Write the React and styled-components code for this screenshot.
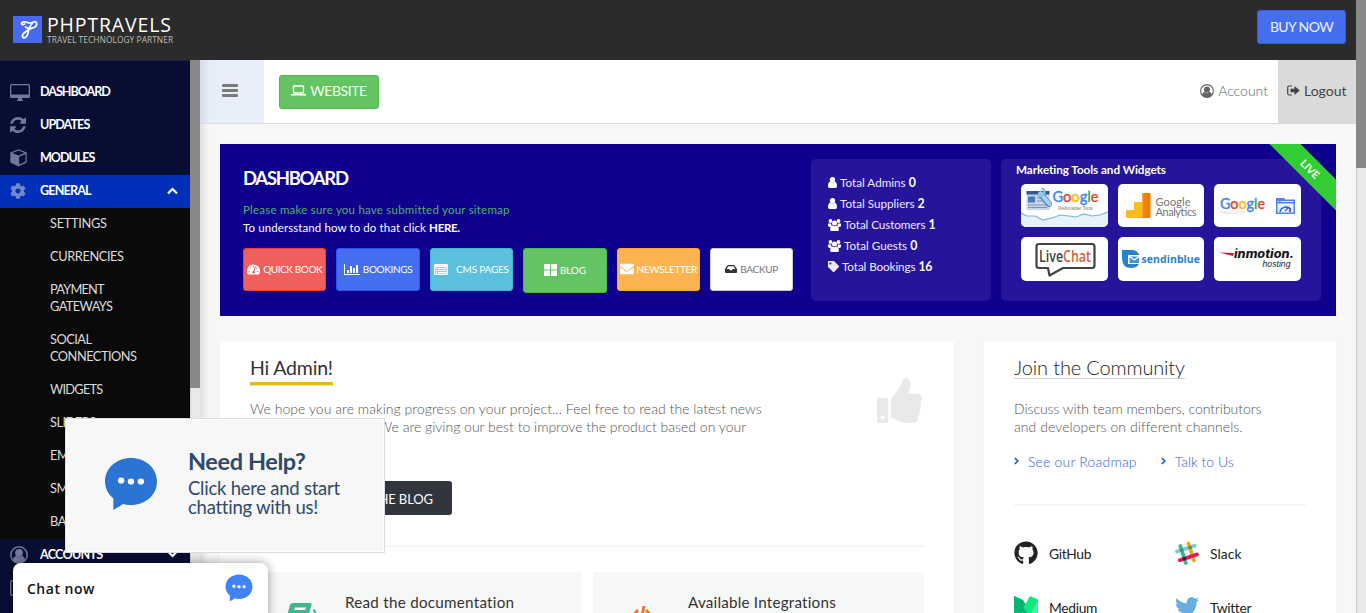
import React from 'react';
import styled, { createGlobalStyle, css } from 'styled-components';
import {
  FaCog, FaThumbsUp, FaTachometerAlt, FaEnvelope, FaInbox, FaTag, FaTwitter, FaGithub,
} from 'react-icons/fa';

const Global = createGlobalStyle`
  *, *::before, *::after { box-sizing: border-box; }
  body { margin: 0; background: #f7f7f7; overflow: hidden; font-family: Lato, "Liberation Sans", sans-serif; font-size: 13px; color: #333; }
  a { color: inherit; text-decoration: none; }
  svg { display: block; flex: none; }
  h1, h2, h3, p, ul { margin: 0; padding: 0; font-weight: inherit; font-size: inherit; list-style: none; }
`;

/* shared */
const T = styled.span`
  white-space: nowrap;
  letter-spacing: ${p => p.$ls || 0}px;
`;

/* frame */
const Window = styled.div`display: flex; height: 613px; width: 1366px; overflow: hidden;`;
const Page = styled.div`width: 1356px; display: flex; flex-direction: column;`;
const ScrollTrack = styled.div`
  width: 10px; flex: none; background: #e9e9e9; border-left: 1px solid #c8c8c8;
`;
const ScrollThumb = styled.div`width: 10px; margin-left: -1px; height: ${p => p.$h}px; background: #888;`;

const TopBar = styled.header`
  height: 60px; flex: none; background: #2b2b2b; display: flex; align-items: center;
  justify-content: space-between; padding: 0 10px 2px 13px;
`;
const Brand = styled.a`display: flex; align-items: center; gap: 5px;`;
const BrandText = styled.div`display: flex; flex-direction: column; font-family: "Open Sans", sans-serif; padding-top: 1px;`;
const BrandName = styled(T)`font-size: 19.5px; line-height: 20px; font-weight: 500; color: #fff;`;
const BrandTag = styled(T)`font-size: 8.4px; line-height: 10px; color: #bdbdbd;`;
const BuyButton = styled.button`
  width: 89px; height: 34px; margin-bottom: 4px; padding: 0 0 2px; border-radius: 3px; background: #466ef1; border: 1px solid #2f5cf0;
  color: #eef2ff; font: 400 14px Lato, sans-serif;
`;
const Body = styled.div`flex: 1; min-height: 0; display: flex;`;

/* sidebar */
const Sidebar = styled.nav`
  width: 190px; flex: none; background: #080e33; border-top: 1px solid #1c2348; padding-top: 15px;
  height: 553px; overflow: hidden;
`;
const NavItem = styled.a`
  display: flex; align-items: center; height: 33px; padding: 0 0 2px 10px; color: #fff; font-weight: 700; font-size: 12.6px;
  ${p => p.$active && css`background: #0030b9;`}
`;
const NavIcon = styled.span`width: 30px; color: ${p => (p.$active ? '#7488c9' : '#74779a')}; margin-top: 1px;`;
const NavArrow = styled.span`margin-left: auto; margin-right: 12px;`;
const SubMenu = styled.div`background: #0a0a0a;`;
const SubItem = styled.a`
  display: block; padding: 7.4px 40px 8.6px 50px; min-height: 33px; line-height: 17px; font-size: 12.8px; color: #dcdcdc;
`;
const SideScroll = styled.div`width: 10px; flex: none; background: #e9e9e9; border-left: 1px solid #d2d2d2;`;

/* content */
const Content = styled.div`flex: 1; display: flex; flex-direction: column; box-shadow: inset 12px 0 10px -10px rgba(0,0,0,.14);`;
const SubBar = styled.div`height: 64px; flex: none; display: flex; background: #fff; border-bottom: 1px solid #d9dadb; align-items: stretch;`;
const Burger = styled.div`
  width: 64px; background: linear-gradient(90deg, #d6dde9, #e7eefa 10px); display: flex; flex-direction: column; justify-content: center; gap: 2px;
  padding: 0 0 3px 22px;
`;
const BurgerLine = styled.i`width: 16px; height: 3px; background: #7a7a7a; border-radius: 1px;`;
const WebsiteButton = styled.a`
  align-self: center; margin: 0 0 0 15px; width: 100px; height: 34px; background: #64c464; border: 1px solid #4dbb4d; border-radius: 3px;
  color: #f4fff4; font-size: 14px; display: flex; align-items: center; justify-content: center; gap: 4px; padding-bottom: 2px;
`;
const AccountLink = styled.a`
  margin-left: auto; display: flex; align-items: center; gap: 4px; padding: 0 10px 2px 0; color: #666; font-size: 14px; font-weight: 300;
`;
const LogoutLink = styled.a`width: 78px; background: #dadada; display: flex; align-items: center; gap: 4px; padding: 0 0 2px 9px; color: #444; font-size: 14px;`;
const Main = styled.main`padding: 20px 20px 0; display: flex; flex-direction: column; gap: 25px;`;

/* banner */
const Banner = styled.section`
  position: relative; height: 172px; background: #0f008e; color: #fff; display: flex; padding: 15px 15px 15px 23px; overflow: hidden; flex: none;
`;
const Intro = styled.div`width: 568px; flex: none; display: flex; flex-direction: column;`;
const BannerTitle = styled.h1`font-size: 18.5px; font-weight: 700; line-height: 24px; margin-top: 7px;`;
const Notice = styled.p`font-size: 11.5px; line-height: 18px; white-space: nowrap; color: ${p => p.$c};`;
const Notices = styled.div`margin: 11px 0 11px;`;
const Actions = styled.div`display: flex; gap: 10px; align-items: flex-start;`;
const Action = styled.a`
  width: 83.4px; height: ${p => p.$h || 43}px; border-radius: 3px; background: ${p => p.$bg}; border: 1px solid ${p => p.$bd};
  color: ${p => p.$fg || '#fff'}; font-size: 10px; display: flex; align-items: center; justify-content: center; gap: ${p => p.$gap || 3}px;
  padding-bottom: 1px;
`;
const Stats = styled.ul`width: 180px; height: 142px; background: #26149a; border-radius: 5px; padding: 13px 0 0 17px;`;
const Stat = styled.li`height: 21px; display: flex; align-items: center; gap: 3px; font-size: 11.7px; color: #ece9ff;
  b { font-size: 12.3px; color: #fff; margin-left: 3px; letter-spacing: -.4px; }`;
const Tools = styled.div`width: 320px; height: 142px; margin-left: 10px; background: #26149a; border-radius: 5px; padding: 2px 20px 0;`;
const ToolsTitle = styled.h2`font-size: 11.7px; font-weight: 700; line-height: 16px; margin: 0 0 7px -5px;`;
const ToolGrid = styled.div`display: grid; grid-template-columns: 87px 86px 87px; column-gap: 10px; row-gap: 10px;`;
const Tool = styled.a`height: ${p => p.$h || 43}px; background: #fff; border-radius: 5px; overflow: hidden;`;
const Ribbon = styled.div`
  position: absolute; right: -39px; top: 14px; width: 130px; height: 22px; background: #32cd32; color: #fff; transform: rotate(45deg);
  font-size: 10.5px; font-weight: 700; line-height: 22px; text-align: center;
`;

/* cards */
const Columns = styled.div`display: flex; gap: 30px;`;
const Card = styled.section`
  background: #fff; border-radius: 3px; height: 300px; padding: ${p => p.$pt}px 30px 0; width: ${p => p.$w}px; box-shadow: 0 1px 2px rgba(0,0,0,.04);
`;
const CardTop = styled.div`display: flex; justify-content: space-between; height: 124px;`;
const Hello = styled.h2`font-size: 19.5px; line-height: 22px; display: inline-block; border-bottom: 3px solid #f1b320; color: #333; box-shadow: 0 1px #dcdcdc; height: 28px;`;
const Lead = styled.p`font-size: 14px; font-weight: 300; line-height: 18px; color: #555; margin-top: ${p => p.$mt}px;`;
const Hidden = styled.span`display: inline-block; width: 128px;`;
const ThumbWrap = styled.div`color: #e9e9eb; margin: 21px 2px 0 0;`;
const BlogButton = styled.a`
  display: flex; width: 202px; height: 34px; align-items: center; justify-content: flex-end; padding: 1px 19px 0 0;
  border-radius: 3px; background: #31353d; color: #fff; font-size: 13px;
`;
const Divider = styled.hr`border: 0; height: 2px; background: #f6f6f6; margin: ${p => p.$m};`;
const Tiles = styled.div`display: flex; gap: 12px;`;
const Tile = styled.a`width: 331px; height: 120px; background: #f6f7f7; padding: 20px 0 0 ${p => p.$pl}px; display: flex; gap: ${p => p.$gap}px; font-size: 15.2px; line-height: 20px; color: #333;`;
const TileIcon = styled.span`margin-top: ${p => p.$mt}px;`;
const JoinTitle = styled.h2`font-size: 20px; font-weight: 300; line-height: 23px; height: 23px; display: inline-block; border-bottom: 1px solid #cfd3d8; color: #222;`;
const Links = styled.div`display: flex; gap: 24px; margin-top: 16px; height: 18px; align-items: center; font-size: 14px; font-weight: 300; color: #3560e0;`;
const CardLink = styled.a`display: flex; align-items: center; gap: 9px;`;
const Channels = styled.div`display: grid; grid-template-columns: 161px 1fr; row-gap: 30px; margin-top: 36px;`;
const Channel = styled.a`display: flex; align-items: center; gap: 11px; height: 24px; padding-bottom: 2px; font-size: 13.8px; color: #222;`;

/* chat */
const HelpPopup = styled.aside`
  position: absolute; left: 65px; top: 418px; width: 320px; height: 135px; background: #f7f7f7; border: 1px solid #dcdcdc; box-shadow: inset 0 0 0 1px #fff;
  display: flex; align-items: flex-start; padding: 38px 0 0 38px; gap: 30px; color: #2f4a68;
`;
const HelpText = styled.div`display: flex; flex-direction: column; font-size: 18.5px; line-height: 19px; margin-top: -10px;
  b { font-size: 23.5px; line-height: 28px; margin-bottom: 4px; }`;
const ChatBar = styled.aside`
  position: absolute; left: 13px; top: 563px; width: 255px; height: 60px; border-radius: 8px; background: #fff; box-shadow: 0 0 10px 1px rgba(0,0,0,.33);
  display: flex; justify-content: space-between; padding: 10px 15px 0 14px; font: 600 14px/32px "Open Sans", sans-serif; color: #111;
  svg { margin-top: 1px; }
`;

const Monitor = () => (
  <svg width="20" height="17" viewBox="0 0 20 17" fill="currentColor">
    <path fillRule="evenodd" d="M1.5 0h17A1.5 1.5 0 0 1 20 1.5v11a1.5 1.5 0 0 1-1.5 1.5H12v1.5l1 .5v1H7v-1l1-.5V14H1.5A1.5 1.5 0 0 1 0 12.500v-11A1.500 1.500 0 0 1 1.500 0zM1.300 1.300v9.200h17.400V1.300z" />
  </svg>
);
const Refresh = () => (
  <svg width="16" height="16" viewBox="0 0 1536 1536" fill="currentColor">
    <path d="M1511 928q0 5-1 7-64 268-268 434.500T764 1536q-146 0-282.500-55T238 1324l-129 129q-19 19-45 19t-45-19-19-45V960q0-26 19-45t45-19h448q26 0 45 19t19 45-19 45l-137 137q71 66 161 102t187 36q134 0 250-65t186-179q11-17 53-117 8-23 30-23h192q13 0 22.500 9.500t9.500 22.500zm25-800v448q0 26-19 45t-45 19h-448q-26 0-45-19t-19-45 19-45l138-138Q969 256 768 256q-134 0-250 65T332 500q-11 17-53 117-8 23-30 23H50q-13 0-22.500-9.500T18 608v-7q65-268 270-434.500T768 0q146 0 284 55.500T1297 212l130-129q19-19 45-19t45 19 19 45z" />
  </svg>
);
const Cube = () => (
  <svg width="17" height="18" viewBox="0 0 17 18" fill="currentColor">
    <path fillRule="evenodd" d="M8.500 .3 16.700 3.500V13.500L8.500 17.500.3 13.500V3.500zM8.500 1.600 2.400 4 8.500 6.400 14.600 4zM9.200 7.700V15.600L15.500 12.600V5.200z" />
  </svg>
);
const UserCircle = ({ s }) => (
  <svg width={s} height={s} viewBox="0 0 18 18">
    <circle cx="9" cy="9" r="8.200" fill="none" stroke="currentColor" strokeWidth="1.500" />
    <circle cx="9" cy="7" r="3.900" fill="currentColor" />
    <path d="M2.500 14.400C3.200 11.300 5.100 10 6.400 10c1.600 1.500 3.600 1.500 5.200 0 1.300 0 3.200 1.300 3.900 4.400A8 8 0 0 1 9 17a8 8 0 0 1-6.500-2.600z" fill="currentColor" />
  </svg>
);
const Paper = () => (
  <svg width="16" height="16" viewBox="0 0 16 16" fill="none" stroke="currentColor" strokeWidth="1.400"><rect x=".7" y=".7" width="14.600" height="14.600" rx="1.500" /><path d="M3 4h9M3 7h3M3 9.500h3M3 12h3" /></svg>
);
const Chevron = ({ down }) => (
  <svg width="11" height="8" viewBox="0 0 11 8"><path d={down ? 'M1 1.500 5.500 6 10 1.500' : 'M1 6.500 5.500 2 10 6.500'} fill="none" stroke="#fff" strokeWidth="2.200" /></svg>
);
const Laptop = () => (
  <svg width="15" height="11" viewBox="0 0 15 11" fill="none" stroke="#fff"><rect x="2.500" y="1" width="10" height="7" rx=".8" strokeWidth="1.300" /><path d="M0 9.800h15" strokeWidth="1.500" /></svg>
);
const SignOut = () => (
  <svg width="13" height="11" viewBox="0 0 13 11"><path d="M5 1H2.200Q.7 1 .7 2.500v6Q.7 10 2.200 10H5" fill="none" stroke="currentColor" strokeWidth="1.200" /><path d="M3.500 3.800H7.500V1L12.800 5.500 7.500 10V7.200H3.500z" fill="currentColor" /></svg>
);
const Bars = () => (
  <svg width="16" height="11" viewBox="0 0 16 11" fill="#fff"><path d="M0 0h1v10h15v1H0zM3 6h2v3H3zM6 2h2v7H6zM9 4h2v5H9zM12 1h2v8h-2z" /></svg>
);
const Listing = () => (
  <svg width="14" height="11" viewBox="0 0 14 11"><rect width="14" height="11" rx="1.300" fill="#fff" /><path d="M1.200 3.200h11.600v6.500H1.200z" fill="#8bd3e8" /><path d="M2 4.500h1M4 4.500h8M2 6.500h1M4 6.500h8M2 8.500h1M4 8.500h8" stroke="#fff" strokeWidth="1" /></svg>
);
const Blocks = () => (
  <svg width="13" height="12" viewBox="0 0 13 12" fill="#fff"><path d="M0 0h6v5.500H0zM7 0h6v5.500H7zM0 6.500h6V12H0zM7 6.500h6V12H7z" /></svg>
);
const Group = () => (
  <svg width="13" height="12" viewBox="0 0 13 12" fill="#fff"><circle cx="2.500" cy="2" r="1.900" /><circle cx="10.500" cy="2" r="1.900" /><circle cx="6.500" cy="4" r="2.500" /><path d="M0 4.500h3.200Q3 6.500 4 7L2 8Q0 8 0 6.500zM13 4.500H9.800Q10 6.500 9 7L11 8q2 0 2-1.500zM2.200 9.500Q2.500 6.500 4.500 6.500q2 1.400 4 0 2 0 2.300 3V11q0 1-1 1H3.200q-1 0-1-1z" /></svg>
);
const Person = () => (
  <svg width="9" height="11" viewBox="0 0 9 11" fill="#fff"><circle cx="4.500" cy="2.700" r="2.700" /><path d="M0 9Q0 5 2.200 4.800q2.300 1.500 4.600 0Q9 5 9 9q0 2-1.500 2h-6Q0 11 0 9z" /></svg>
);
const Angle = () => (
  <svg width="5" height="8" viewBox="0 0 5 8"><path d="M.8 1 3.800 4 .8 7" fill="none" stroke="#1f5be8" strokeWidth="1.700" /></svg>
);
const Bubble = ({ w, color }) => (
  <svg width={w} height={w} viewBox="0 0 52 54" preserveAspectRatio="none">
    <path d="M26 1C40 1 51 11 51 24.500S40 48 26 48c-3 0-5-.3-7.500-1L9 53V41.500C4 37 1 31.500 1 24.500 1 11 12 1 26 1z" fill={color} />
    <g fill="#fff"><circle cx="16.500" cy="23.500" r="3.100" /><circle cx="26" cy="24.500" r="3.100" /><circle cx="35.500" cy="24.500" r="3.100" /></g>
  </svg>
);
const Logo = () => (
  <svg width="29" height="27" viewBox="0 0 29 27">
    <rect width="29" height="27" fill="#466af0" />
    <path d="M8.500 7C10 5.500 12 5.500 14.500 6.500S19 7.300 22 5.500C24.500 6.500 24.500 10 21 11.500S14 12 12.500 11M20 6.500C17 9.500 15.800 12.500 15 17s-4.500 6.500-5.500 3.500 4-5.500 9.500-8.500M8.500 8Q10 9.500 11.500 8" fill="none" stroke="#fff" strokeWidth="1.700" strokeLinecap="round" strokeLinejoin="round" />
  </svg>
);
const Book = () => (
  <svg width="32" height="30" viewBox="0 0 32 30"><path d="M8 0h17q2 0 1.500 2L21 21H4q-4 0-3-4L5 2Q5.500 0 8 0z" fill="#3fb68b" /><path d="M10 4.500h11l-.8 2.500h-11z" fill="#fff" /><path d="M28 7q3 1 2 4l-4 13H5" fill="none" stroke="#3fb68b" strokeWidth="2" /></svg>
);
const Code = () => (
  <svg width="34" height="26" viewBox="0 0 34 26" fill="none" stroke="#f0782d" strokeWidth="3"><path d="M12 4 4 13l9 8M18 0 13 24M20 4l8 9-8 8" /></svg>
);
const Slack = () => (
  <svg width="24" height="24" viewBox="0 0 24 24" fill="none" strokeWidth="3.800" strokeLinecap="round">
    <path d="M2 10.500 19.500 4.800" stroke="#7bcbd3" /><path d="M13.500 2.500 19 19.500" stroke="#e9a820" /><path d="M5.300 5 10.800 22" stroke="#3eb890" /><path d="M4.800 19.200 22 13.500" stroke="#e01765" />
    <path d="M6.700 9.200v-.2M15 6.600v-.2" stroke="#3f8f7c" strokeLinecap="square" strokeWidth="3" /><path d="M9.300 17.500v.1" stroke="#38273c" strokeLinecap="square" strokeWidth="3.400" /><path d="M17.600 15v.1" stroke="#c7362a" strokeLinecap="square" strokeWidth="3" />
  </svg>
);
const Medium = () => (
  <svg width="24" height="24" viewBox="0 0 24 24"><path d="M0 1 8 5v19H0z" fill="#00ab6c" /><path d="M0 1 9 5l8 13v6h-5L7 15V24H0z" fill="#00b874" /><path d="M9.500 12.500 16 1l8 3.500V24h-7z" fill="#12e780" /><path d="M17 18 24 6v18h-7z" fill="#3df79b" /></svg>
);

const google = ['#4285f4', '#ea4335', '#fbbc05', '#4285f4', '#34a853', '#ea4335'];
const GoogleWord = ({ x, y, size, len }) => (
  <text x={x} y={y} fontSize={size} fontFamily="Lato, sans-serif" fontWeight="500" textLength={len} lengthAdjust="spacingAndGlyphs">
    {'Google'.split('').map((c, i) => <tspan key={i} fill={google[i]} stroke={google[i]} strokeWidth=".3">{c}</tspan>)}
  </text>
);
const ToolSvg = ({ children }) => <svg width="87" height="44" viewBox="0 0 87 44">{children}</svg>;

const WebmasterTools = () => (
  <ToolSvg>
    <rect x="5.500" y="7" width="23" height="19" fill="#c7d6e8" /><rect x="5.500" y="7" width="23" height="3.500" fill="#35588f" />
    <rect x="7" y="12.500" width="7" height="6" fill="#4778ba" /><path d="M16 14h10M16 17h10M7 21h19M7 23.500h19" stroke="#7d94b2" />
    <path d="M19.500 10l8.500 10" stroke="#4e86c2" strokeWidth="6" strokeLinecap="round" /><path d="M19.500 9.500l9 10.500" stroke="#a8d2ef" strokeWidth="4" strokeLinecap="round" />
    <path d="M20.500 4.500q4 1 2.500 5-3 4-6.500 1" fill="none" stroke="#8fc1e8" strokeWidth="2.500" />
    <GoogleWord x="31.500" y="17.500" size="15" len="46" />
    <text x="37" y="26" fontSize="5" fill="#888" fontFamily="Liberation Sans" textLength="35">Webmaster Tools</text>
    <path d="M0 29l6 3 8 0 8 4 12-3 5-2 9 1 7 1 8-3 8 2 8-1 8-3V44H0z" fill="#e6f3fa" /><path d="M0 29l6 3 8 0 8 4 12-3 5-2 9 1 7 1 8-3 8 2 8-1 8-3" fill="none" stroke="#79b7da" strokeWidth="1.200" />
  </ToolSvg>
);
const Analytics = () => (
  <ToolSvg>
    <path d="M24.500 9h7.500q.5 0 .5.500V33q0 1-1 1h-7z" fill="#f57c00" /><path d="M24.500 9v25H9q-1 0-1-1v-6q0-1 1-1h7v-7q0-1 1-1h7.500V10q0-1 1-1z" fill="#fbbc1d" /><path d="M24.500 9v25h3V9z" fill="#ef8a0c" />
    <text fontSize="11" fill="#757575" fontFamily="Lato"><tspan x="37.500" y="21.500" textLength="35">Google</tspan><tspan x="37.500" y="31.800" textLength="41">Analytics</tspan></text>
  </ToolSvg>
);
const PageSpeed = () => (
  <ToolSvg>
    <GoogleWord x="6" y="24.500" size="15" len="45" />
    <text x="6" y="30" fontSize="4.500" fill="#dcdcdc" fontFamily="Liberation Sans" textLength="25">PageSpeed</text>
    <path d="M62 14h8l1.500 1.500H81V30H62z" fill="#4a86e8" /><rect x="63.500" y="19.500" width="16" height="9" fill="#e9f0fd" /><path d="M63.500 17.500h1.500M66.500 17.500h13" stroke="#dbe7fb" />
    <path d="M66 28a6 6 0 0 1 11-2" fill="none" stroke="#2c64c8" strokeWidth="1.500" /><path d="M71 27l4-4" stroke="#2c64c8" strokeWidth="1.300" /><circle cx="76" cy="27" r="1.200" fill="#e23d2e" />
  </ToolSvg>
);
const LiveChat = () => (
  <ToolSvg>
    <path d="M18 7h53q2.500 0 2.500 2.500v19Q73.500 31 71 31H42L28.500 38.500 27 31h-9q-2.500 0-2.500-2.500v-19Q15.500 7 18 7z" fill="#fff" stroke="#424242" strokeWidth="2.200" strokeLinejoin="round" />
    <text x="18" y="25" fontSize="16" fontWeight="600" fontFamily="Open Sans" fill="#424242" textLength="52" lengthAdjust="spacingAndGlyphs">Live<tspan fill="#d96532">Chat</tspan></text>
  </ToolSvg>
);
const SendInBlue = () => (
  <ToolSvg>
    <path d="M4 13h11q7 1 7 9.500T13 31Q4 31 4 21z" fill="#2a83c9" /><path d="M10 18h12v9H10z" fill="#fff" /><path d="M11.500 19.500h9.500v6.500h-9.500z" fill="#4593cf" /><path d="M11.500 19.500l4.800 3.500 4.700-3.500" fill="none" stroke="#fff" strokeWidth="1.300" />
    <text x="23.500" y="25.500" fontSize="10.500" fontWeight="700" fill="#2a83c9" fontFamily="Open Sans" textLength="58.500">sendinblue</text>
  </ToolSvg>
);
const InMotion = () => (
  <ToolSvg>
    <path d="M5 15.500 20 16 19 19z" fill="#c8202f" />
    <text x="20" y="20.500" fontSize="11.500" fontWeight="800" fontStyle="italic" fill="#1a1a1a" fontFamily="Inter" textLength="60" lengthAdjust="spacingAndGlyphs">inmotion.</text>
    <text x="48.500" y="30" fontSize="8.500" fontStyle="italic" fill="#1a1a1a" fontFamily="Liberation Sans" textLength="28" lengthAdjust="spacingAndGlyphs">hosting</text>
  </ToolSvg>
);

export default function App() {
  return (
    <>
      <Global />
      <Window>
        <Page>
          <TopBar>
            <Brand>
              <Logo />
              <BrandText><BrandName $ls={0.85}>PHPTRAVELS</BrandName><BrandTag $ls={0.05}>TRAVEL TECHNOLOGY PARTNER</BrandTag></BrandText>
            </Brand>
            <BuyButton><T $ls={-0.6}>BUY NOW</T></BuyButton>
          </TopBar>
          <Body>
            <Sidebar>
              <NavItem><NavIcon><Monitor /></NavIcon><T $ls={-1.05}>DASHBOARD</T></NavItem>
              <NavItem><NavIcon><Refresh /></NavIcon><T $ls={-0.95}>UPDATES</T></NavItem>
              <NavItem><NavIcon><Cube /></NavIcon><T $ls={-1.05}>MODULES</T></NavItem>
              <NavItem $active><NavIcon $active><FaCog size={16} /></NavIcon><T $ls={-0.85}>GENERAL</T><NavArrow><Chevron /></NavArrow></NavItem>
              <SubMenu>
                <SubItem><T $ls={-0.3}>SETTINGS</T></SubItem>
                <SubItem><T $ls={-0.4}>CURRENCIES</T></SubItem>
                <SubItem><T $ls={-0.8}>PAYMENT</T><br /><T $ls={-0.6}>GATEWAYS</T></SubItem>
                <SubItem><T $ls={-0.5}>SOCIAL</T><br /><T $ls={-0.5}>CONNECTIONS</T></SubItem>
                <SubItem><T $ls={-0.75}>WIDGETS</T></SubItem>
                <SubItem><T $ls={-0.5}>SLIDERS</T></SubItem>
                <SubItem><T $ls={-0.5}>EMAIL</T></SubItem>
                <SubItem><T $ls={-0.5}>SMS API</T></SubItem>
                <SubItem><T $ls={-0.5}>BACKUP</T></SubItem>
              </SubMenu>
              <NavItem><NavIcon><UserCircle s={18} /></NavIcon><T $ls={-0.75}>ACCOUNTS</T><NavArrow><Chevron down /></NavArrow></NavItem>
              <NavItem><NavIcon><Paper /></NavIcon></NavItem>
            </Sidebar>
            <SideScroll><ScrollThumb $h={328} /></SideScroll>
            <Content>
              <SubBar>
                <Burger><BurgerLine /><BurgerLine /><BurgerLine /></Burger>
                <WebsiteButton><Laptop /><T $ls={-0.45}>WEBSITE</T></WebsiteButton>
                <AccountLink><UserCircle s={14} /><T>Account</T></AccountLink>
                <LogoutLink><SignOut /><T>Logout</T></LogoutLink>
              </SubBar>
              <Main>
                <Banner>
                  <Intro>
                    <BannerTitle><T $ls={-1.3}>DASHBOARD</T></BannerTitle>
                    <Notices>
                      <Notice $c="#4fae72"><T $ls={0.22}>Please make sure you have submitted your sitemap</T></Notice>
                      <Notice $c="#fff"><T $ls={0.1}>To undersstand how to do that click </T> <b><T $ls={-0.3}>HERE.</T></b></Notice>
                    </Notices>
                    <Actions>
                      <Action $bg="#ef605d" $bd="#f03c3c"><FaTachometerAlt size={13} /><T $ls={-0.4}>QUICK BOOK</T></Action>
                      <Action $bg="#466ef1" $bd="#2f55ee"><Bars /><T $ls={-0.35}>BOOKINGS</T></Action>
                      <Action $bg="#5bc0de" $bd="#3fb3d8" $gap={8}><Listing /><T $ls={-0.2}>CMS PAGES</T></Action>
                      <Action $bg="#64c464" $bd="#48b94a" $h={45}><Blocks /><T $ls={-0.2}>BLOG</T></Action>
                      <Action $bg="#fcb450" $bd="#fda432"><FaEnvelope size={14} /><T $ls={-0.35}>NEWSLETTER</T></Action>
                      <Action $bg="#fff" $bd="#ccc" $fg="#777"><FaInbox size={12} color="#333" /><T $ls={-0.3}>BACKUP</T></Action>
                    </Actions>
                  </Intro>
                  <Stats>
                    <Stat><Person /><T $ls={0}>Total Admins<b>0</b></T></Stat>
                    <Stat><Person /><T $ls={0}>Total Suppliers<b>2</b></T></Stat>
                    <Stat><Group /><T $ls={-0.1}>Total Customers<b>1</b></T></Stat>
                    <Stat><Group /><T $ls={0}>Total Guests<b>0</b></T></Stat>
                    <Stat><FaTag size={11} /><T $ls={-0.1}>Total Bookings<b>16</b></T></Stat>
                  </Stats>
                  <Tools>
                    <ToolsTitle><T $ls={-0.05}>Marketing Tools and Widgets</T></ToolsTitle>
                    <ToolGrid>
                      <Tool><WebmasterTools /></Tool>
                      <Tool><Analytics /></Tool>
                      <Tool><PageSpeed /></Tool>
                      <Tool $h={44}><LiveChat /></Tool>
                      <Tool $h={44}><SendInBlue /></Tool>
                      <Tool $h={44}><InMotion /></Tool>
                    </ToolGrid>
                  </Tools>
                  <Ribbon>LIVE</Ribbon>
                </Banner>
                <Columns>
                  <Card $w={734} $pt={16}>
                    <CardTop>
                      <div>
                        <Hello><T $ls={-0.18}>Hi Admin!</T></Hello>
                        <Lead $mt={15}>
                          <T $ls={0.04}>We hope you are making progress on your project... Feel free to read the latest news</T><br />
                          <Hidden>from our blog.</Hidden><T $ls={0}>We are giving our best to improve the product based on your</T>
                        </Lead>
                      </div>
                      <ThumbWrap><FaThumbsUp size={45} /></ThumbWrap>
                    </CardTop>
                    <BlogButton><T $ls={-0.1}>VISIT THE BLOG</T></BlogButton>
                    <Divider $m="30px 0 25px" />
                    <Tiles>
                      <Tile $pl={35} $gap={28}><TileIcon $mt={11}><Book /></TileIcon><T $ls={0.26}>Read the documentation</T></Tile>
                      <Tile $pl={33} $gap={28}><TileIcon $mt={14}><Code /></TileIcon><T $ls={0.22}>Available Integrations</T></Tile>
                    </Tiles>
                  </Card>
                  <Card $w={352} $pt={15}>
                    <JoinTitle><T $ls={-0.15}>Join the Community</T></JoinTitle>
                    <Lead $mt={21}><T $ls={-0.05}>Discuss with team members, contributors</T><br /><T $ls={0.06}>and developers on different channels.</T></Lead>
                    <Links><CardLink><Angle /><T $ls={0.19}>See our Roadmap</T></CardLink><CardLink><Angle /><T>Talk to Us</T></CardLink></Links>
                    <Divider $m="34px 0 0" />
                    <Channels>
                      <Channel><FaGithub size={24} /><T $ls={-0.35}>GitHub</T></Channel>
                      <Channel><Slack /><T $ls={0.1}>Slack</T></Channel>
                      <Channel><Medium /><T $ls={-0.3}>Medium</T></Channel>
                      <Channel><FaTwitter size={24} color="#66aee0" /><T $ls={-0.3}>Twitter</T></Channel>
                    </Channels>
                  </Card>
                </Columns>
              </Main>
            </Content>
          </Body>
        </Page>
        <ScrollTrack><ScrollThumb $h={168} /></ScrollTrack>
      </Window>
      <HelpPopup>
        <Bubble w={54} color="#2b74d3" />
        <HelpText><b><T $ls={-0.4}>Need Help?</T></b><T $ls={-0.25}>Click here and start</T><T $ls={-0.25}>chatting with us!</T></HelpText>
      </HelpPopup>
      <ChatBar><T $ls={0.5}>Chat now</T><Bubble w={28} color="#3f83f6" /></ChatBar>
    </>
  );
}
